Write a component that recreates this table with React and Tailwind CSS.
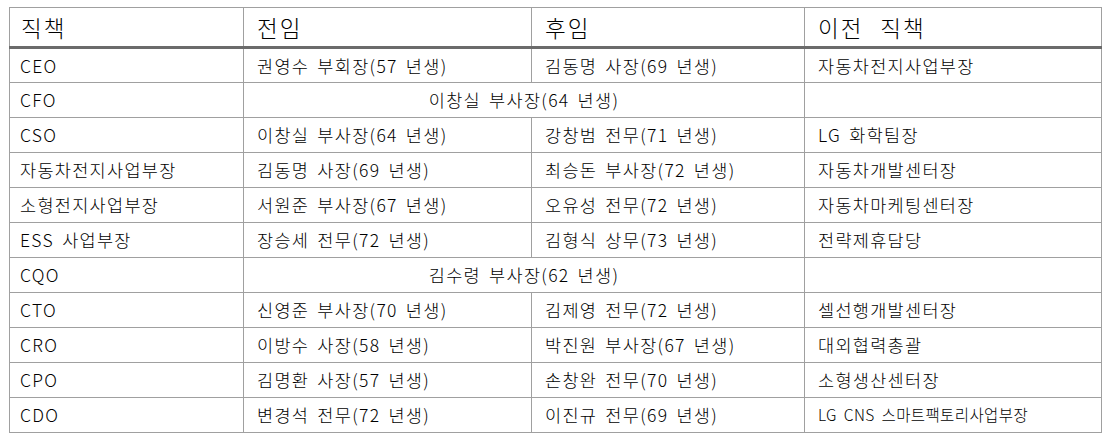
export default function App() {
  const rows = [
    ["CEO", "권영수 부회장(57 년생)", "김동명 사장(69 년생)", "자동차전지사업부장"],
    ["CFO", "이창실 부사장(64 년생)", null, ""],
    ["CSO", "이창실 부사장(64 년생)", "강창범 전무(71 년생)", "LG 화학팀장"],
    ["자동차전지사업부장", "김동명 사장(69 년생)", "최승돈 부사장(72 년생)", "자동차개발센터장"],
    ["소형전지사업부장", "서원준 부사장(67 년생)", "오유성 전무(72 년생)", "자동차마케팅센터장"],
    ["ESS 사업부장", "장승세 전무(72 년생)", "김형식 상무(73 년생)", "전략제휴담당"],
    ["CQO", "김수령 부사장(62 년생)", null, ""],
    ["CTO", "신영준 부사장(70 년생)", "김제영 전무(72 년생)", "셀선행개발센터장"],
    ["CRO", "이방수 사장(58 년생)", "박진원 부사장(67 년생)", "대외협력총괄"],
    ["CPO", "김명환 사장(57 년생)", "손창완 전무(70 년생)", "소형생산센터장"],
    ["CDO", "변경석 전무(72 년생)", "이진규 전무(69 년생)", "LG CNS 스마트팩토리사업부장"],
  ];
  const font = { fontFamily: '"Noto Sans CJK KR", "Noto Sans", sans-serif', fontWeight: 300 };
  return (
    <div className="w-[1115px] h-[443px] bg-white pt-[7px] pl-[9px]" style={font}>
      <table className="border-collapse table-fixed w-[1092px] text-black [word-spacing:3px]">
        <colgroup>
          <col className="w-[234px]" />
          <col className="w-[288px]" />
          <col className="w-[273px]" />
          <col className="w-[297px]" />
        </colgroup>
        <thead>
          <tr className="h-[40px] text-[22.5px] leading-none tracking-[2px]">
            <th className="border border-[#a0a0a0] border-b-[3px] border-b-[#6b6b6b] text-left font-light pl-[11px] pt-[1px]">직책</th>
            <th className="border border-[#a0a0a0] border-b-[3px] border-b-[#6b6b6b] text-left font-light pl-[13px] pt-[1px]">전임</th>
            <th className="border border-[#a0a0a0] border-b-[3px] border-b-[#6b6b6b] text-left font-light pl-[13px] pt-[1px]">후임</th>
            <th className="border border-[#a0a0a0] border-b-[3px] border-b-[#6b6b6b] text-left font-light pl-[13px] pt-[1px] [word-spacing:10px]">이전 직책</th>
          </tr>
        </thead>
        <tbody>
          {rows.map((r, i) => (
            <tr key={i} className="h-[35px] text-[17.5px] leading-none tracking-[1.3px]">
              <td className="border border-[#a0a0a0] pl-[10px] whitespace-nowrap">{r[0]}</td>
              {r[2] === null ? (
                <td colSpan={2} className="border border-[#a0a0a0] text-center whitespace-nowrap">{r[1]}</td>
              ) : (
                <>
                  <td className="border border-[#a0a0a0] pl-[13px] whitespace-nowrap">{r[1]}</td>
                  <td className="border border-[#a0a0a0] pl-[13px] whitespace-nowrap">{r[2]}</td>
                </>
              )}
              {i === 10 ? (
                <td className="border border-[#a0a0a0] pl-[13px] whitespace-nowrap text-[15.5px] tracking-[0.4px]">{r[3]}</td>
              ) : (
                <td className="border border-[#a0a0a0] pl-[13px] whitespace-nowrap">{r[3]}</td>
              )}
            </tr>
          ))}
        </tbody>
      </table>
    </div>
  );
}
